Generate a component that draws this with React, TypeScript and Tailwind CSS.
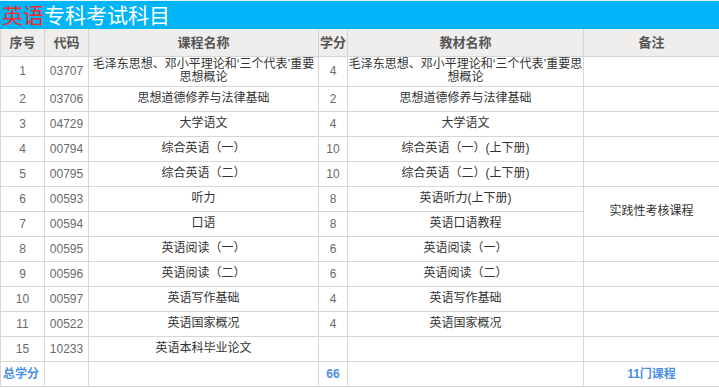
import React from "react";

type Row = { no: string; code: string; name: string; credit: string; book: string };

const rows: Row[] = [
  { no: "1", code: "03707", name: "毛泽东思想、邓小平理论和‘三个代表’重要思想概论", credit: "4", book: "毛泽东思想、邓小平理论和‘三个代表’重要思想概论" },
  { no: "2", code: "03706", name: "思想道德修养与法律基础", credit: "2", book: "思想道德修养与法律基础" },
  { no: "3", code: "04729", name: "大学语文", credit: "4", book: "大学语文" },
  { no: "4", code: "00794", name: "综合英语（一）", credit: "10", book: "综合英语（一）(上下册)" },
  { no: "5", code: "00795", name: "综合英语（二）", credit: "10", book: "综合英语（二）(上下册)" },
  { no: "6", code: "00593", name: "听力", credit: "8", book: "英语听力(上下册)" },
  { no: "7", code: "00594", name: "口语", credit: "8", book: "英语口语教程" },
  { no: "8", code: "00595", name: "英语阅读（一）", credit: "6", book: "英语阅读（一）" },
  { no: "9", code: "00596", name: "英语阅读（二）", credit: "6", book: "英语阅读（二）" },
  { no: "10", code: "00597", name: "英语写作基础", credit: "4", book: "英语写作基础" },
  { no: "11", code: "00522", name: "英语国家概况", credit: "4", book: "英语国家概况" },
  { no: "15", code: "10233", name: "英语本科毕业论文", credit: "", book: "" },
];

const cjk = "font-['Liberation_Sans','Noto_Sans_CJK_SC',sans-serif]";
const td = "border border-[#d6d6d6] text-center align-middle p-0";
const num = "text-[12px] text-[#6a6a6a]";
const txt = "text-[12px] text-[#333] leading-[13px]";

export default function App() {
  return (
    <div className={`w-[719px] h-[388px] bg-white ${cjk} overflow-hidden`}>
      <div className="h-[29px] bg-[#00b5f7] border-t border-[#e6f6fd] flex items-center pl-[2px] text-[21px] leading-none">
        <span className="text-[#f22b2b]">英语</span>
        <span className="text-white">专科考试科目</span>
      </div>
      <table className="w-[719px] table-fixed border-collapse">
        <colgroup>
          <col className="w-[44px]" />
          <col className="w-[44px]" />
          <col className="w-[230px]" />
          <col className="w-[29px]" />
          <col className="w-[236px]" />
          <col className="w-[136px]" />
        </colgroup>
        <thead>
          <tr className="h-[27px] bg-[#f0eded] text-[13px] font-bold text-[#555]">
            <th className={`${td} border-t-0`}>序号</th>
            <th className={`${td} border-t-0`}>代码</th>
            <th className={`${td} border-t-0`}>课程名称</th>
            <th className={`${td} border-t-0`}>学分</th>
            <th className={`${td} border-t-0`}>教材名称</th>
            <th className={`${td} border-t-0`}>备注</th>
          </tr>
        </thead>
        <tbody>
          {rows.map((r, i) => (
            <tr key={r.code} className={i === 0 ? "h-[30px]" : "h-[25px]"}>
              <td className={`${td} ${num}`}>{r.no}</td>
              <td className={`${td} ${num}`}>{r.code}</td>
              <td className={`${td} ${txt}`}>{r.name}</td>
              <td className={`${td} ${num}`}>{r.credit}</td>
              <td className={`${td} ${txt}`}>{r.book}</td>
              {i === 5 ? (
                <td rowSpan={2} className={`${td} ${txt}`}>实践性考核课程</td>
              ) : i === 6 ? null : (
                <td className={td}></td>
              )}
            </tr>
          ))}
          <tr className="h-[25px] text-[12px] font-bold text-[#4a8ee6]">
            <td className={`${td} text-left pl-[2px]`}>总学分</td>
            <td className={td}></td>
            <td className={td}></td>
            <td className={td}>66</td>
            <td className={td}></td>
            <td className={td}>11门课程</td>
          </tr>
        </tbody>
      </table>
    </div>
  );
}
